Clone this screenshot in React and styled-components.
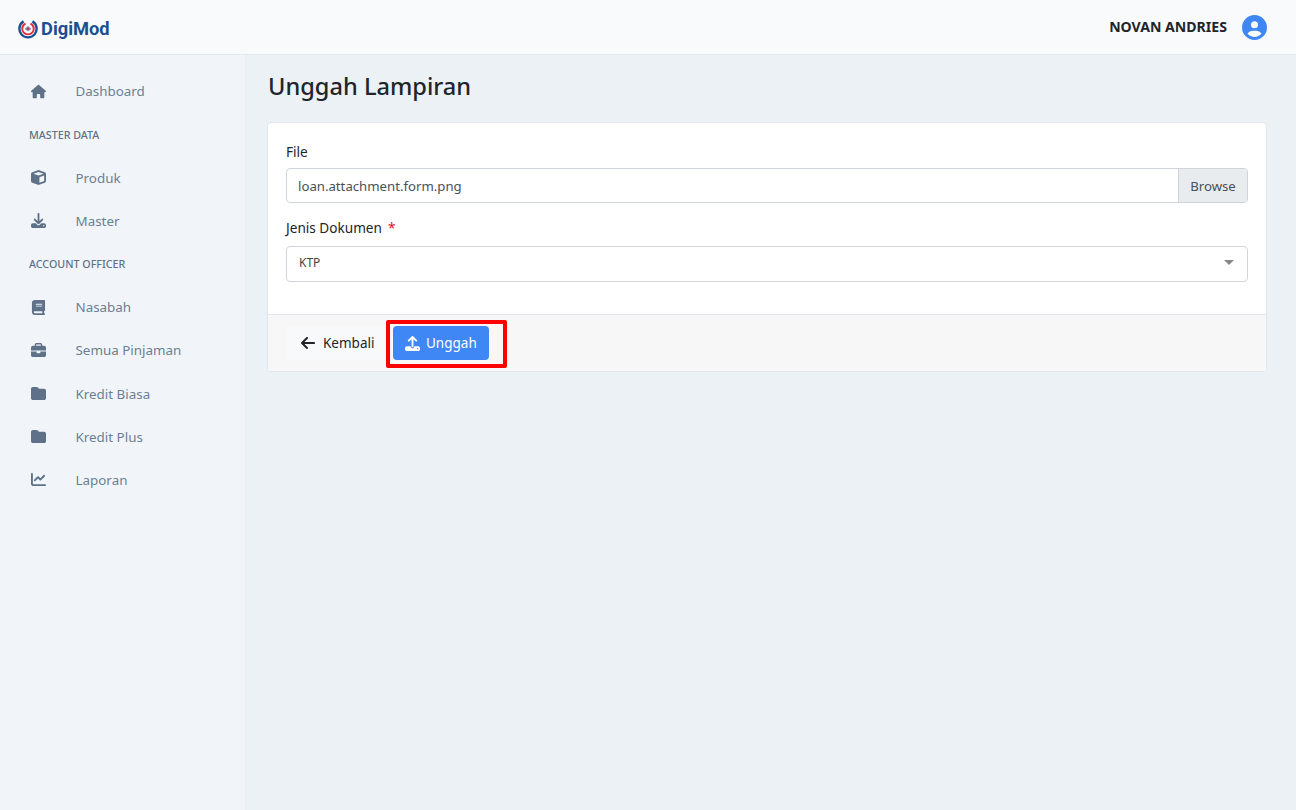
import React from 'react';
import styled, { createGlobalStyle } from 'styled-components';
import { FaHouse, FaCube, FaDownload, FaBook, FaBriefcase, FaFolder, FaChartLine, FaCircleUser, FaUpload, FaArrowLeft } from 'react-icons/fa6';

const Global = createGlobalStyle`
  html, body { margin: 0; padding: 0; height: 100%; }
  body { background: #ecf1f5; font-family: "Noto Sans", "Open Sans", sans-serif; font-size: 14px; color: #212529; }
  * { box-sizing: border-box; }
`;
const Page = styled.div`width: 1296px; height: 810px; display: flex; flex-direction: column; overflow: hidden;`;
const Header = styled.header`height: 55px; flex: none; background: #f8fafc; border-bottom: 1px solid #e3e8ee; display: flex; align-items: center; justify-content: space-between; padding: 0 29px 0 17px;`;
const Logo = styled.div`display: flex; align-items: center; gap: 2px; margin-top: 3px;`;
const LogoText = styled.span`font-family: "Roboto", sans-serif; font-weight: 700; font-size: 18.3px; color: #1c4f8f;`;
const User = styled.div`display: flex; align-items: center; gap: 15px;`;
const UserName = styled.span`font-weight: 700; font-size: 14.1px; color: #212529; margin-top: -1px;`;
const Avatar = styled(FaCircleUser)`font-size: 25px; color: #3f87f5;`;
const Body = styled.div`flex: 1; display: flex; min-height: 0;`;
const Sidebar = styled.nav`width: 246px; margin-right: -1px; flex: none; background: #f1f5fa; border-right: 1px solid #e8edf3; padding: 14.6px 0 0 29px; display: flex; flex-direction: column;`;
const NavItem = styled.div`height: 43.2px; display: flex; align-items: center; color: #6c7f93; font-size: 13.4px;`;
const NavIcon = styled.span`width: 18px; margin-right: 28.5px; flex: none; display: flex; justify-content: center; color: #5f7189; font-size: 15px;`;
const NavHead = styled.div`height: 43.2px; padding-top: 1px; display: flex; align-items: center; font-size: 10.7px; font-weight: 500; color: #5f7189;`;
const Main = styled.main`flex: 1; padding: 14px 29px 0 22px;`;
const Title = styled.h1`margin: 0 0 18px 1px; font-size: 23.6px; line-height: 35px; font-weight: 500; color: #212529;`;
const Card = styled.section`background: #fff; border: 1px solid #e2e6ea; border-radius: 4px; overflow: hidden;`;
const CardBody = styled.div`padding: 18px 18px 32px;`;
const Field = styled.div`margin-bottom: 14px; &:last-child { margin-bottom: 0; }`;
const Label = styled.label`display: block; font-size: 13.6px; line-height: 21px; margin-bottom: ${p => p.$gap}px; color: #212529;`;
const Required = styled.span`color: #e3121c; margin-left: 6px;`;
const FileBox = styled.div`height: 35px; display: flex; border: 1px solid #ced4da; border-radius: 4px; overflow: hidden;`;
const FileName = styled.div`flex: 1; display: flex; align-items: center; padding: 0 11px; color: #495057; font-size: 13.2px;`;
const Browse = styled.div`width: 69px; display: flex; align-items: center; justify-content: center; background: #e9ecef; border-left: 1px solid #ced4da; color: #495057; font-size: 13.2px;`;
const Select = styled.div`height: 36px; display: flex; align-items: center; justify-content: space-between; padding: 0 13px 3px 12px; border: 1px solid #d2d6da; border-radius: 4px; font-size: 12px; color: #444;`;
const Caret = styled.span`width: 0; height: 0; border-left: 5px solid transparent; border-right: 5px solid transparent; border-top: 5px solid #888;`;
const Footer = styled.div`height: 57px; background: #f7f7f7; border-top: 1px solid #e2e6ea; display: flex; align-items: center; gap: 7px; padding: 0 18px;`;
const BackButton = styled.button`height: 34px; width: 100px; border: 0; border-radius: 4px; background: #f8f9fa; color: #212529; font: inherit; font-size: 13.5px; display: flex; align-items: center; gap: 7px; padding: 0 0 0 14px; svg { font-size: 16px; }`;
const PrimaryButton = styled.button`position: relative; height: 34px; width: 96px; border: 0; border-radius: 4px; background: #3f87f5; color: #fff; font: inherit; font-size: 13.5px; display: flex; align-items: center; gap: 6px; padding: 0 0 0 12px; svg { font-size: 15px; }
  &::after { content: ""; position: absolute; left: -7px; right: -18px; top: -6px; bottom: -8px; border: 4px solid #ff0000; border-radius: 2px; }`;

const LogoMark = () => (
  <svg width="22" height="22" viewBox="0 0 22 22">
    <path d="M6 2.2 A 9.8 9.8 0 1 0 16 2.2 L14.8 4.6 A 7.4 7.4 0 1 1 7.2 4.6 Z" fill="#1c4f8f" />
    <path d="M8 4.4 A 6.8 6.8 0 1 0 14 4.4 L13 6.4 A 4.8 4.8 0 1 1 9 6.4 Z" fill="#e0303c" />
    <path d="M7.6 10.8 L11 8 L14.4 10.8 L11 13.6 Z" fill="#7c93b8" />
    <circle cx="11" cy="10.8" r="1.3" fill="#e0303c" />
  </svg>
);

const top = [['Produk', <FaCube />], ['Master', <FaDownload />]];
const officer = [['Nasabah', <FaBook />], ['Semua Pinjaman', <FaBriefcase />], ['Kredit Biasa', <FaFolder />], ['Kredit Plus', <FaFolder />], ['Laporan', <FaChartLine />]];
const Item = ({ label, icon }) => <NavItem><NavIcon>{icon}</NavIcon>{label}</NavItem>;

export default function App() {
  return (
    <Page>
      <Global />
      <Header>
        <Logo><LogoMark /><LogoText>DigiMod</LogoText></Logo>
        <User><UserName>NOVAN ANDRIES</UserName><Avatar /></User>
      </Header>
      <Body>
        <Sidebar>
          <Item label="Dashboard" icon={<FaHouse />} />
          <NavHead>MASTER DATA</NavHead>
          {top.map(([l, i]) => <Item key={l} label={l} icon={i} />)}
          <NavHead>ACCOUNT OFFICER</NavHead>
          {officer.map(([l, i]) => <Item key={l} label={l} icon={i} />)}
        </Sidebar>
        <Main>
          <Title>Unggah Lampiran</Title>
          <Card>
            <CardBody>
              <Field>
                <Label $gap={6}>File</Label>
                <FileBox><FileName>loan.attachment.form.png</FileName><Browse>Browse</Browse></FileBox>
              </Field>
              <Field>
                <Label $gap={8}>Jenis Dokumen<Required>*</Required></Label>
                <Select>KTP<Caret /></Select>
              </Field>
            </CardBody>
            <Footer>
              <BackButton><FaArrowLeft />Kembali</BackButton>
              <PrimaryButton><FaUpload />Unggah</PrimaryButton>
            </Footer>
          </Card>
        </Main>
      </Body>
    </Page>
  );
}
